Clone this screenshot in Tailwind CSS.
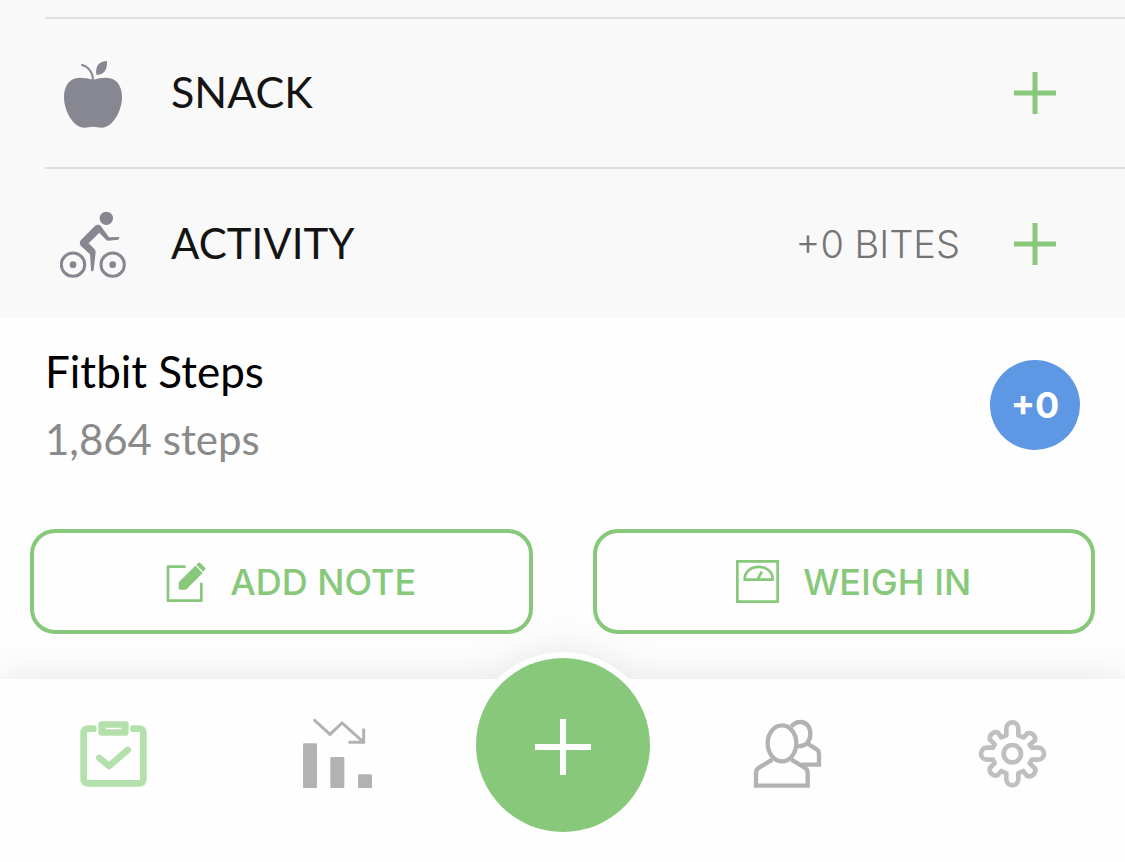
<!DOCTYPE html>
<html lang="en">
<head>
  <meta charset="UTF-8" />
  <meta name="viewport" content="width=device-width, initial-scale=1.0" />
  <title>Daily Log</title>
  <script src="https://cdn.jsdelivr.net/npm/@tailwindcss/browser@4"></script>
</head>
<body class="bg-[#fefefe] min-h-screen flex flex-col overflow-x-hidden font-['Lato',sans-serif] text-[#141414]">
  <main>
    <!-- Log sections -->
    <ul class="bg-[#f9f9f9] pt-[17px]">
      <li class="ml-[45px] h-[150px] border-t-2 border-[#dfdfdf] pl-[15px] pr-[69px] flex items-center">
        <svg class="w-[66px] h-[70px] shrink-0" viewBox="60 54 198 210" fill="#878792" aria-hidden="true">
          <path d="M159 119C146 115 133 113 119 113C88 113 72 138 72 171C72 214 101 263 133 263C144 263 150 260 159 260C168 260 174 263 185 263C217 263 246 214 246 171C246 138 230 113 199 113C185 113 172 115 159 119Z" />
          <path d="M126 75C146 80 159 99 159 120" fill="none" stroke="#878792" stroke-width="6" stroke-linecap="round" />
          <path d="M169 104C165 79 177 63 201 63C203 89 191 106 169 104Z" />
        </svg>
        <h2 class="ml-[45px] pb-[2px] flex-1 text-[43px] leading-[50px]">SNACK</h2>
        <button type="button" aria-label="Add snack">
          <svg class="w-[42px] h-[42px]" viewBox="0 0 42 42" stroke="#87c87a" stroke-width="5"><path d="M21 0V42M0 21H42" /></svg>
        </button>
      </li>
      <li class="ml-[45px] h-[152px] border-t-2 border-[#dfdfdf] pl-[15px] pr-[69px] flex items-center">
        <svg class="w-[66px] h-[70px] shrink-0" viewBox="60 54 198 210" fill="#878792" aria-hidden="true">
          <g fill="none" stroke="#878792" stroke-width="9">
            <circle cx="99" cy="221" r="35" />
            <circle cx="218" cy="221" r="35" />
          </g>
          <circle cx="99" cy="221" r="10" />
          <circle cx="218" cy="221" r="10" />
          <circle cx="199" cy="82" r="20" />
          <path d="M164 106C170 100 178 100 183 106L207 139L234 138C239 138 239 146 234 146L205 149C202 149 200 148 198 146L178 125L146 157L163 174C166 177 167 180 167 184L161 236C160 242 153 242 153 236L150 190L123 165C118 160 118 152 123 147Z" />
        </svg>
        <h2 class="ml-[45px] pb-[2px] flex-1 text-[42px] leading-[50px]">ACTIVITY</h2>
        <span class="mr-[54px] font-['Inter',sans-serif] font-light text-[38px] leading-[50px] text-[#757575]">+0 BITES</span>
        <button type="button" aria-label="Add activity">
          <svg class="w-[42px] h-[42px]" viewBox="0 0 42 42" stroke="#87c87a" stroke-width="5"><path d="M21 0V42M0 21H42" /></svg>
        </button>
      </li>
    </ul>

    <!-- Synced steps -->
    <section class="pt-[18px] px-[45px] flex items-center justify-between">
      <div>
        <h3 class="text-[44px] leading-[68px] text-black">Fitbit Steps</h3>
        <p class="text-[42px] leading-[68px] text-[#8a8a8a]">1,864 steps</p>
      </div>
      <span class="w-[90px] h-[90px] rounded-full bg-[#5e97e4] text-white font-['Inter',sans-serif] font-bold text-[36px] flex items-center justify-center">+0</span>
    </section>

    <!-- Quick actions -->
    <div class="pt-[56px] px-[30px] grid grid-cols-2 gap-[60px] font-['Inter',sans-serif] font-medium text-[36px] text-[#87c87a]">
      <button type="button" class="h-[105px] pl-[20px] border-4 border-[#87c87a] rounded-[25px] flex items-center justify-center gap-[24px]">
        <svg class="w-[40px] h-[40px]" viewBox="436 124 118 120" fill="#87c87a" aria-hidden="true">
          <path d="M494 138H441V240H541V186" fill="none" stroke="#87c87a" stroke-width="8" stroke-linejoin="round" />
          <path d="M473 185L523 135L545 157L495 207H478Q473 207 473 202Z" />
          <path d="M526 132L532 126Q535 124 538 127L552 141Q555 144 552 147L547 153Z" />
        </svg>
        ADD NOTE
      </button>
      <button type="button" class="h-[105px] pl-[20px] border-4 border-[#87c87a] rounded-[25px] flex items-center justify-center gap-[24px]">
        <svg class="w-[43px] h-[43px]" viewBox="468 120 127 127" fill="none" stroke="#87c87a" stroke-width="8" aria-hidden="true">
          <path d="M472 124H591V243H472Z" />
          <path d="M494 178V175C494 155 511 140 535 140C559 140 576 155 576 175V178Z" />
          <path d="M532 177L544 154" />
        </svg>
        WEIGH IN
      </button>
    </div>
  </main>

  <!-- Tab bar -->
  <nav class="relative mt-[45px] flex-1 min-h-[183px] drop-shadow-[0_0_20px_rgba(0,0,0,0.1)]">
    <div class="absolute left-1/2 top-[-27px] -translate-x-1/2 w-[186px] h-[186px] rounded-full bg-[#fefefe]"></div>
    <div class="relative h-full min-h-[183px] bg-[#fefefe] grid grid-cols-5 justify-items-center items-start">
      <a href="#log" aria-label="Log" class="mt-[38px]">
        <svg class="w-[74px] h-[74px]" viewBox="48 51 222 222" fill="none" stroke="#b4e0ac" stroke-width="20" stroke-linecap="round" stroke-linejoin="round">
          <path d="M100 86H85Q71 86 71 100V236Q71 250 85 250H236Q250 250 250 236V100Q250 86 236 86H220" />
          <path d="M118 174L147 198L203 150" />
          <path d="M125 64H197Q206 64 206 73V98Q206 107 197 107H125Q115 107 115 98V73Q115 64 125 64ZM137 83V88H184V83Z" fill="#b4e0ac" stroke="none" fill-rule="evenodd" />
        </svg>
      </a>
      <a href="#progress" aria-label="Progress" class="mt-[38px]">
        <svg class="w-[74px] h-[74px]" viewBox="63 51 222 222" fill="#b2b2b2">
          <rect x="69" y="130" width="42" height="134" rx="4" />
          <rect x="151" y="171" width="42" height="93" rx="4" />
          <rect x="234" y="223" width="42" height="41" rx="4" />
          <path d="M104 61L150 103L186 69L248 124M251 89V127H209" fill="none" stroke="#b2b2b2" stroke-width="9" stroke-linecap="round" />
        </svg>
      </a>
      <button type="button" aria-label="Add entry" class="relative -mt-[21px] w-[174px] h-[174px] rounded-full bg-[#87c87a] flex items-center justify-center">
        <svg class="mt-[4px] w-[56px] h-[56px]" viewBox="0 0 56 56" stroke="#fff" stroke-width="6"><path d="M28 0V56M0 28H56" /></svg>
      </button>
      <a href="#friends" aria-label="Friends" class="mt-[38px]">
        <svg class="w-[74px] h-[74px]" viewBox="48 51 222 222" fill="none" stroke="#b2b2b2" stroke-width="13">
          <path d="M169 80C177 70 186 66 197 66C215 66 226 82 226 101C226 113 222 123 216 130L245 148Q252 152 252 162V194H200M183 137C190 140 206 139 216 130" />
          <ellipse cx="141" cy="130" rx="43" ry="54" />
          <path d="M112 179L72 203Q63 209 63 219V257H218V219Q218 209 209 203L169 179" />
        </svg>
      </a>
      <a href="#settings" aria-label="Settings" class="mt-[38px]">
        <svg class="w-[74px] h-[74px]" viewBox="48 51 222 222" fill="none" stroke="#bfbfbf" stroke-width="14" stroke-linejoin="round">
          <circle cx="157" cy="161" r="26" />
          <path d="M139 106V85A18 18 0 0 1 175 85V106L191 112L202 100A18 18 0 0 1 225 121L209 134L215 143H234A18 18 0 0 1 234 179H215L209 190L225 205A18 18 0 0 1 200 227L190 213L175 220V238A18 18 0 0 1 139 238V220L124 213L112 226A18 18 0 0 1 90 203L104 190L99 179H81A18 18 0 0 1 81 143H99L104 133L90 119A18 18 0 0 1 114 98L124 112Z" />
        </svg>
      </a>
    </div>
  </nav>
</body>
</html>
